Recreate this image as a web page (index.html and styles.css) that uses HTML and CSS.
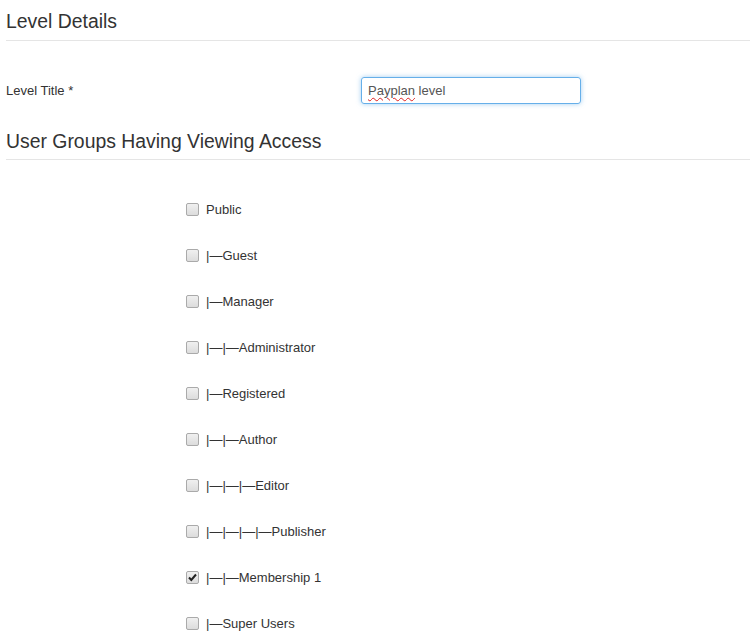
FILE: index.html
```html
<!DOCTYPE html>
<html lang="en">
  <head>
    <meta charset="UTF-8" />
    <meta name="viewport" content="width=device-width, initial-scale=1.0" />
    <title>Level Details</title>
    <link rel="stylesheet" href="styles.css">
  </head>
  <body>
    <div class="page">
      <h2 class="section-title">Level Details</h2>

      <div class="form-row">
        <label class="form-label">Level Title *</label>
        <div class="text-field"><span class="misspelled">Payplan</span> level</div>
      </div>

      <h2 class="section-title second">User Groups Having Viewing Access</h2>

      <ul class="groups">
        <li><input type="checkbox" /><span>Public</span></li>
        <li><input type="checkbox" /><span>|—Guest</span></li>
        <li><input type="checkbox" /><span>|—Manager</span></li>
        <li><input type="checkbox" /><span>|—|—Administrator</span></li>
        <li><input type="checkbox" /><span>|—Registered</span></li>
        <li><input type="checkbox" /><span>|—|—Author</span></li>
        <li><input type="checkbox" /><span>|—|—|—Editor</span></li>
        <li><input type="checkbox" /><span>|—|—|—|—Publisher</span></li>
        <li><input type="checkbox" checked /><span>|—|—Membership 1</span></li>
        <li><input type="checkbox" /><span>|—Super Users</span></li>
      </ul>
    </div>
  </body>
</html>
```

FILE: styles.css
```css
*,
*::before,
*::after {
  box-sizing: border-box;
  padding: 0;
  margin: 0;
}
body {
  font-family: "Liberation Sans", Arial, sans-serif;
  color: #333;
  background: #fff;
}
.page {
  padding: 0 1px 0 6px;
}
.section-title {
  font-size: 19.4px;
  font-weight: normal;
  line-height: 24px;
  padding: 9px 0 7px;
  border-bottom: 1px solid #e5e5e5;
}
.section-title.second {
  margin-top: 25px;
  padding: 0 0 6px;
}
.form-row {
  margin-top: 36px;
  display: flex;
  align-items: center;
}
.form-label {
  width: 355px;
  font-size: 13px;
}
.text-field {
  width: 220px;
  height: 27px;
  padding: 0 6px;
  font-size: 13px;
  line-height: 25px;
  color: #555;
  border: 1px solid #66afe9;
  border-radius: 3px;
  box-shadow: 0 0 5px rgba(102, 175, 233, 0.6);
}
.misspelled {
  text-decoration: underline wavy #e02020;
  text-decoration-thickness: 1px;
  text-underline-offset: 2px;
}
.groups {
  list-style: none;
  margin-top: 26px;
  padding-left: 180px;
}
.groups li {
  height: 46px;
  display: flex;
  align-items: center;
  font-size: 13px;
}
.groups input {
  appearance: none;
  width: 13px;
  height: 13px;
  margin-right: 7px;
  border: 1px solid #aaa;
  border-radius: 2px;
  background: linear-gradient(#f0f0f0, #dcdcdc);
  background-color: #e6e6e6;
}
.groups input:checked {
  background: url("data:image/svg+xml,%3Csvg xmlns='http://www.w3.org/2000/svg' viewBox='0 0 11 11'%3E%3Cpath d='M2 5.5 L4.3 8 L9 2.5' fill='none' stroke='%23222' stroke-width='2'/%3E%3C/svg%3E") center / 11px 11px no-repeat, linear-gradient(#f0f0f0, #dcdcdc);
}
```
